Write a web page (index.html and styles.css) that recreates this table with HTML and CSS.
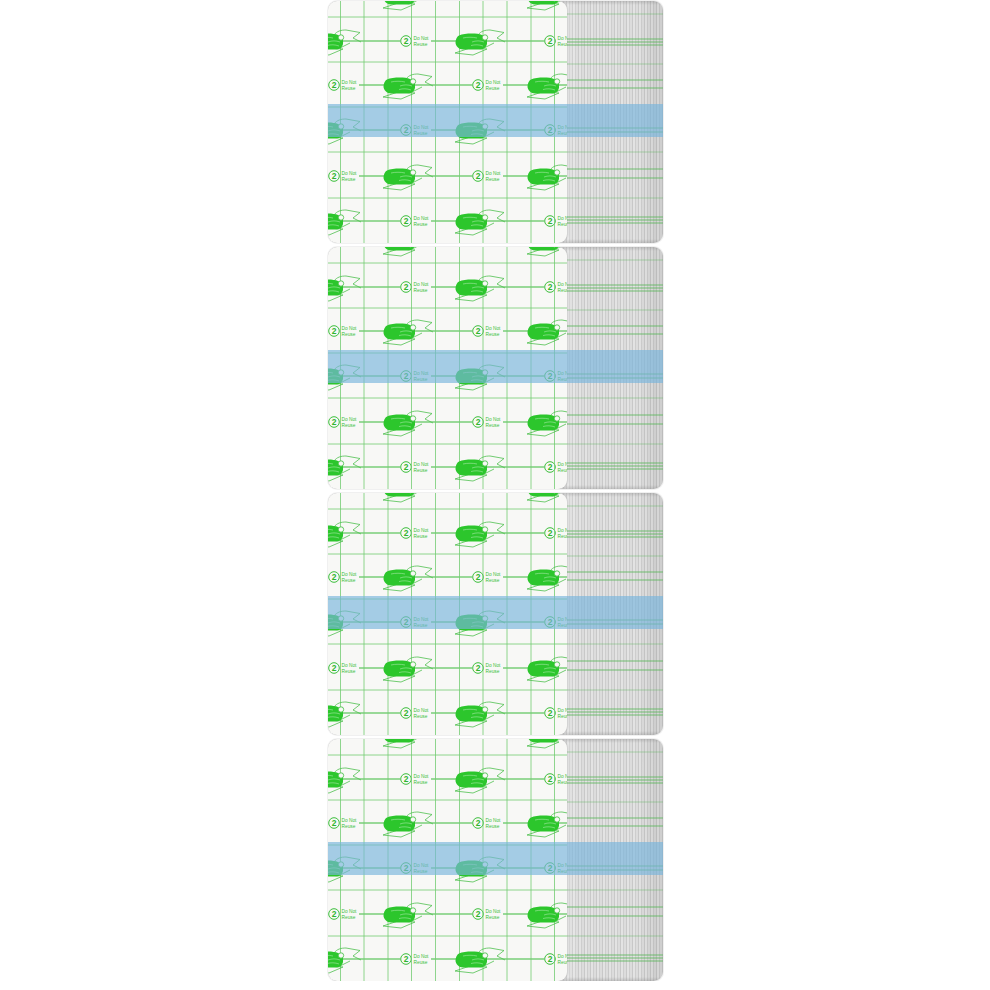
FILE: index.html
```html
<!DOCTYPE html>
<html lang="en">
<head>
<meta charset="utf-8">
<title>Transparent film dressing pads</title>
<link rel="stylesheet" href="styles.css">
</head>
<body>
<svg class="defs" width="0" height="0" aria-hidden="true">
  <defs>
    <g id="hand">
      <path d="M-2 12 L13 7 L30 8 L16 14 Z" fill="none" stroke="#4fc04f" stroke-width="0.8"/>
      <path d="M21 -6 C24 -10 28 -11 33 -11 L47 -8.5 L40 -3 L48 1 M27 7 L37 2" fill="none" stroke="#4fc04f" stroke-width="0.8"/>
      <path d="M2 -5.5 C8 -8 20 -8 25 -6 C28.5 -5 30.5 -2 30 1 C30.5 4.5 28 8 24 8.5 L6 8.5 C2 8.5 -1.5 5 -1.5 1.5 C-1.5 -1.5 0 -4.5 2 -5.5 Z" fill="#2cc62c"/>
      <path d="M15 1 C19 -0.5 23 -0.5 27 1 M14 4.5 C18 3.5 22 3.5 26 5 M6 -3 C10 -4 16 -4 20 -3" fill="none" stroke="#a8eaa8" stroke-width="0.6"/>
      <circle cx="28" cy="-3.5" r="2.7" fill="#f8f8f6" stroke="#3cbf3c" stroke-width="0.8"/>
    </g>
    <g id="logo">
      <rect x="-6" y="-6" width="31" height="12" fill="#f8f8f6"/>
      <circle r="5.3" fill="none" stroke="#3cbf3c" stroke-width="1"/>
      <text class="two" y="3.2" text-anchor="middle" fill="#2fb52f">2</text>
      <text class="dn" x="7.5" y="-1.2" fill="#3cbf3c">Do Not</text>
      <text class="dn" x="7.5" y="4.8" fill="#3cbf3c">Reuse</text>
    </g>
    <g id="art">
      <rect width="239" height="242" fill="#f8f8f6"/>
      <g stroke="#3ab93a" stroke-width="1.1">
        <line x1="0" y1="-5" x2="239" y2="-5"/>
        <line x1="0" y1="40" x2="239" y2="40"/>
        <line x1="0" y1="84" x2="239" y2="84"/>
        <line x1="0" y1="129" x2="239" y2="129"/>
        <line x1="0" y1="175" x2="239" y2="175"/>
        <line x1="0" y1="220" x2="239" y2="220"/>
      </g>
      <use href="#logo" x="78" y="40"/>
      <use href="#logo" x="222" y="40"/>
      <use href="#logo" x="78" y="129"/>
      <use href="#logo" x="222" y="129"/>
      <use href="#logo" x="78" y="220"/>
      <use href="#logo" x="222" y="220"/>
      <use href="#logo" x="6" y="84"/>
      <use href="#logo" x="150" y="84"/>
      <use href="#logo" x="6" y="175"/>
      <use href="#logo" x="150" y="175"/>
      <g stroke="#72cc72" stroke-width="0.8">
        <line x1="12.5" y1="0" x2="12.5" y2="242"/>
        <line x1="36" y1="0" x2="36" y2="242"/>
        <line x1="60" y1="0" x2="60" y2="242"/>
        <line x1="83.5" y1="0" x2="83.5" y2="242"/>
        <line x1="107.5" y1="0" x2="107.5" y2="242"/>
        <line x1="131.5" y1="0" x2="131.5" y2="242"/>
        <line x1="155" y1="0" x2="155" y2="242"/>
        <line x1="179" y1="0" x2="179" y2="242"/>
        <line x1="203" y1="0" x2="203" y2="242"/>
        <line x1="226.5" y1="0" x2="226.5" y2="242"/>
        <line x1="0" y1="16" x2="239" y2="16"/>
        <line x1="0" y1="61" x2="239" y2="61"/>
        <line x1="0" y1="106" x2="239" y2="106"/>
        <line x1="0" y1="151" x2="239" y2="151"/>
        <line x1="0" y1="197" x2="239" y2="197"/>
      </g>
      <use href="#hand" x="57" y="-5"/>
      <use href="#hand" x="201" y="-5"/>
      <use href="#hand" x="-15" y="40"/>
      <use href="#hand" x="129" y="40"/>
      <use href="#hand" x="57" y="84"/>
      <use href="#hand" x="201" y="84"/>
      <use href="#hand" x="-15" y="129"/>
      <use href="#hand" x="129" y="129"/>
      <use href="#hand" x="57" y="175"/>
      <use href="#hand" x="201" y="175"/>
      <use href="#hand" x="-15" y="220"/>
      <use href="#hand" x="129" y="220"/>
    </g>
    <g id="edges">
      <g stroke="#5db85d" stroke-width="1" opacity="0.85">
        <line x1="0" y1="13" x2="96" y2="13" opacity="0.5"/>
        <line x1="0" y1="38" x2="96" y2="38"/>
        <line x1="0" y1="41" x2="96" y2="41"/>
        <line x1="0" y1="44" x2="96" y2="44"/>
        <line x1="0" y1="63" x2="96" y2="63" opacity="0.5"/>
        <line x1="0" y1="79" x2="96" y2="79"/>
        <line x1="0" y1="87" x2="96" y2="87"/>
        <line x1="0" y1="127" x2="96" y2="127"/>
        <line x1="0" y1="131" x2="96" y2="131"/>
        <line x1="0" y1="151" x2="96" y2="151" opacity="0.5"/>
        <line x1="0" y1="168" x2="96" y2="168"/>
        <line x1="0" y1="177" x2="96" y2="177"/>
        <line x1="0" y1="197" x2="96" y2="197" opacity="0.5"/>
        <line x1="0" y1="216" x2="96" y2="216"/>
        <line x1="0" y1="219" x2="96" y2="219"/>
        <line x1="0" y1="222" x2="96" y2="222"/>
      </g>
    </g>
  </defs>
</svg>

<main class="strip">
  <div class="pad">
    <div class="sheet"><svg viewBox="0 0 239 242" width="239" height="242"><use href="#art"/></svg></div>
    <div class="stack"><svg viewBox="0 0 96 242" width="96" height="242" preserveAspectRatio="none"><use href="#edges"/></svg></div>
    <div class="band"></div>
  </div>
  <div class="pad">
    <div class="sheet"><svg viewBox="0 0 239 242" width="239" height="242"><use href="#art"/></svg></div>
    <div class="stack"><svg viewBox="0 0 96 242" width="96" height="242" preserveAspectRatio="none"><use href="#edges"/></svg></div>
    <div class="band"></div>
  </div>
  <div class="pad">
    <div class="sheet"><svg viewBox="0 0 239 242" width="239" height="242"><use href="#art"/></svg></div>
    <div class="stack"><svg viewBox="0 0 96 242" width="96" height="242" preserveAspectRatio="none"><use href="#edges"/></svg></div>
    <div class="band"></div>
  </div>
  <div class="pad">
    <div class="sheet"><svg viewBox="0 0 239 242" width="239" height="242"><use href="#art"/></svg></div>
    <div class="stack"><svg viewBox="0 0 96 242" width="96" height="242" preserveAspectRatio="none"><use href="#edges"/></svg></div>
    <div class="band"></div>
  </div>
</main>
</body>
</html>
```

FILE: styles.css
```css
html, body {
  margin: 0;
  padding: 0;
  background: #ffffff;
}

body {
  font-family: "Liberation Sans", Arial, sans-serif;
}

.defs {
  display: block;
  width: 0;
  height: 0;
  overflow: hidden;
}

.two {
  font-family: "Liberation Sans", Arial, sans-serif;
  font-size: 8.5px;
  font-weight: bold;
}

.dn {
  font-family: "Liberation Sans", Arial, sans-serif;
  font-size: 4.8px;
}

.strip {
  width: 335px;
  margin: 0 auto;
  padding-top: 1px;
  display: flex;
  flex-direction: column;
  gap: 4px;
}

.pad {
  position: relative;
  height: 242px;
  display: flex;
  border-radius: 9px;
  overflow: hidden;
  background: #d2d2d2;
  box-shadow: 0 0 0 1px rgba(0, 0, 0, 0.06);
}

.sheet {
  flex: 0 0 239px;
  height: 242px;
  border-radius: 9px;
  overflow: hidden;
  box-shadow: 1px 0 2px rgba(0, 0, 0, 0.12);
  position: relative;
  z-index: 1;
}

.sheet svg {
  display: block;
}

.stack {
  flex: 1 1 auto;
  height: 242px;
  margin-left: -9px;
  padding-left: 9px;
  border-radius: 0 10px 10px 0;
  background:
    linear-gradient(180deg, rgba(120,120,120,0.3) 0, rgba(120,120,120,0) 4px, rgba(120,120,120,0) 238px, rgba(120,120,120,0.3) 242px),
    linear-gradient(90deg, rgba(255,255,255,0.35) 0, rgba(255,255,255,0) 22px, rgba(0,0,0,0) 80px, rgba(0,0,0,0.06) 96px),
    repeating-linear-gradient(90deg, #dcdcdc 0 2px, #c8c8c8 2px 3.5px, #e3e3e3 3.5px 5px, #cdcdcd 5px 6px);
}

.stack svg {
  display: block;
}

.band {
  position: absolute;
  left: 0;
  right: 0;
  top: 103px;
  height: 33px;
  background: rgba(120, 180, 220, 0.66);
  z-index: 2;
}
```
